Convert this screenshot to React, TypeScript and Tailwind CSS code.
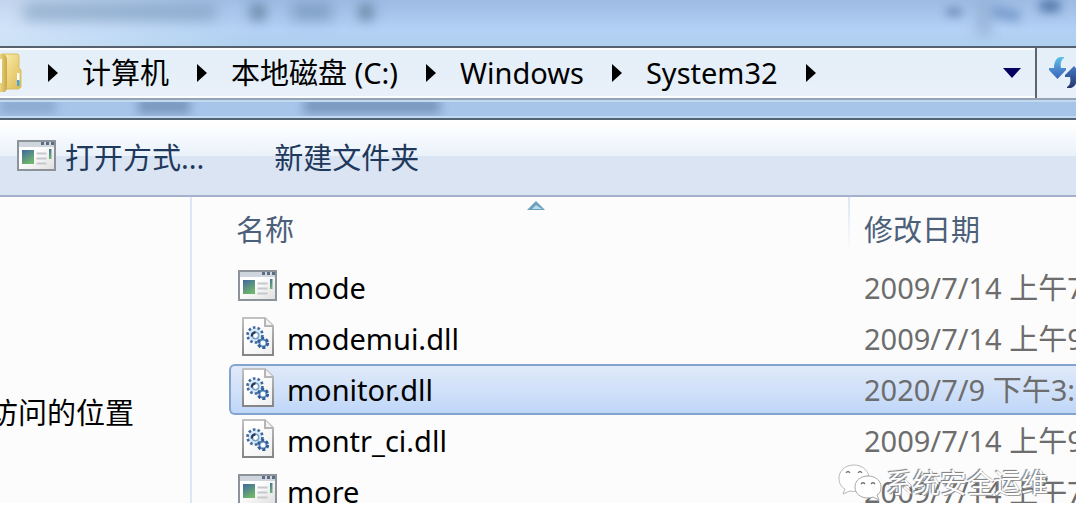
import React from "react";

type FileKind = "app" | "dll";

interface FileRow {
  name: string;
  kind: FileKind;
  date: string;
  selected?: boolean;
}

const files: FileRow[] = [
  { name: "mode", kind: "app", date: "2009/7/14 上午7:" },
  { name: "modemui.dll", kind: "dll", date: "2009/7/14 上午9:" },
  { name: "monitor.dll", kind: "dll", date: "2020/7/9 下午3:", selected: true },
  { name: "montr_ci.dll", kind: "dll", date: "2009/7/14 上午9:" },
  { name: "more", kind: "app", date: "2009/7/14 上午7:" },
];

const crumbs = ["计算机", "本地磁盘 (C:)", "Windows", "System32"];

function AppIcon() {
  return (
    <svg width="40" height="36" viewBox="0 0 40 36" aria-hidden="true" className="block shrink-0">
      <defs>
        <linearGradient id="appPane" x1="0" y1="0" x2="0.5" y2="1">
          <stop offset="0" stopColor="#40679f" />
          <stop offset="1" stopColor="#6fb46c" />
        </linearGradient>
        <linearGradient id="appBody" x1="0" y1="0" x2="1" y2="1">
          <stop offset="0.4" stopColor="#ffffff" />
          <stop offset="1" stopColor="#dedede" />
        </linearGradient>
      </defs>
      <rect x="1" y="1" width="37" height="29" fill="url(#appBody)" stroke="#8d939b" strokeWidth="2" />
      <rect x="2" y="2" width="35" height="5" fill="#cfd5dc" />
      <path d="M24 3.500h3M29 3.500h3M34 3.500h3" stroke="#5b6c84" strokeWidth="3" />
      <rect x="5" y="10" width="12" height="14" fill="url(#appPane)" />
      <path d="M19.500 13.500h10M19.500 18.500h10M19.500 23.500h10" stroke="#c6c8cb" strokeWidth="2" />
      <rect x="32" y="9" width="2.500" height="10" fill="url(#appPane)" />
    </svg>
  );
}

function DllIcon() {
  return (
    <svg width="32" height="43" viewBox="0 0 32 43" aria-hidden="true" className="block shrink-0">
      <defs>
        <linearGradient id="dllEdge" x1="0" y1="0" x2="0" y2="1">
          <stop offset="0" stopColor="#c2c2c2" />
          <stop offset="1" stopColor="#858585" />
        </linearGradient>
        <linearGradient id="dllPaper" x1="0" y1="0" x2="1" y2="1">
          <stop offset="0.3" stopColor="#ffffff" />
          <stop offset="1" stopColor="#efefef" />
        </linearGradient>
      </defs>
      <path d="M1 1H23L31 9V38H1Z" fill="url(#dllPaper)" stroke="url(#dllEdge)" strokeWidth="2" />
      <path d="M23 1V9H31" fill="#f3f3f3" stroke="#b5b5b5" strokeWidth="2" />
      <circle cx="13" cy="18" r="7" fill="#d8e9f6" />
      <circle cx="13" cy="18" r="7.500" fill="none" stroke="#41699f" strokeWidth="2.600" strokeDasharray="2.600 2.110" />
      <circle cx="13.500" cy="18.500" r="3.200" fill="#fff" stroke="#78a1c9" strokeWidth="1.500" />
      <path d="M10 19.500a3.200 3.200 0 0 1 3.500-4" fill="none" stroke="#24395c" strokeWidth="2.400" />
      <circle cx="21" cy="26" r="3.600" fill="#d8e9f6" stroke="#5b88b9" strokeWidth="2" />
      <circle cx="21" cy="26" r="4.800" fill="none" stroke="#315c97" strokeWidth="2.600" strokeDasharray="3 2.030" />
      <circle cx="21" cy="26" r="2" fill="#fff" />
    </svg>
  );
}

function FolderIcon() {
  return (
    <svg width="22" height="40" viewBox="0 0 22 40" aria-hidden="true" className="block shrink-0">
      <defs>
        <linearGradient id="folderBack" x1="0" y1="0" x2="1" y2="1">
          <stop offset="0" stopColor="#fbf0b0" />
          <stop offset="1" stopColor="#dcb94f" />
        </linearGradient>
        <linearGradient id="folderFront" x1="0" y1="0" x2="1" y2="0">
          <stop offset="0" stopColor="#f0dc8a" />
          <stop offset="1" stopColor="#c9a748" />
        </linearGradient>
      </defs>
      <path d="M2 1H17Q19 1 19 3V15L21 17V34L19 36H4Z" fill="url(#folderBack)" stroke="#d9bd62" />
      <path d="M-1 1H4Q7 3 7 8V36L5 39H-1Z" fill="url(#folderFront)" />
      <path d="M-1 6H2V30H-1Z" fill="#fffdf2" />
      <rect x="17" y="20" width="2.500" height="8" fill="#fff" />
      <rect x="17" y="27" width="2.500" height="6" fill="#4aa5dc" />
    </svg>
  );
}

function CrumbArrow() {
  return (
    <svg width="10" height="18" viewBox="0 0 10 18" aria-hidden="true" className="block shrink-0">
      <path d="M0 0L10 9L0 18Z" fill="#000" />
    </svg>
  );
}

function RefreshIcon() {
  return (
    <svg width="40" height="32" viewBox="0 0 40 32" aria-hidden="true" className="block shrink-0">
      <defs>
        <linearGradient id="refreshDown" x1="0" y1="0" x2="0" y2="1">
          <stop offset="0" stopColor="#5cc3e6" />
          <stop offset="0.6" stopColor="#4a84cc" />
          <stop offset="1" stopColor="#3b66b4" />
        </linearGradient>
        <linearGradient id="refreshUp" x1="0" y1="0" x2="0" y2="1">
          <stop offset="0" stopColor="#4377c6" />
          <stop offset="1" stopColor="#27386e" />
        </linearGradient>
      </defs>
      <path d="M15 0H11C7 1 5 5 5 11H0V13L8.500 22L17 13V11H12C11 7 12 3 15 1Z" fill="url(#refreshDown)" />
      <path d="M18 31H22C26 30 28 26 28 20H33V18L25 9L16 18V20H21C22 25 21 28 18 30Z" fill="url(#refreshUp)" />
    </svg>
  );
}

function ChatIcon() {
  return (
    <svg width="44" height="38" viewBox="0 0 44 38" aria-hidden="true" className="block shrink-0">
      <path
        d="M16 1C7 1 1 7 1 14C1 19 3 23 7 25L5 30L12 27Q15 28 19 27C18 18 23 12 31 12C29 5 23 1 16 1Z"
        fill="#fff"
        stroke="#b9b9b9"
      />
      <path
        d="M30 12C22 12 17 17 17 23C17 30 23 34 30 34Q33 34 35 33L41 36L39 31C42 29 43 27 43 23C43 17 38 12 30 12Z"
        fill="#fff"
        stroke="#a9a9a9"
      />
      <path d="M8 9q2-3 4 0M20 9q2-3 4 0M23 20q2-2.500 4 0M33 20q2-2.500 4 0" fill="none" stroke="#777" strokeWidth="1.300" />
    </svg>
  );
}

function TitleGlass() {
  return (
    <div
      aria-hidden="true"
      className="relative h-[46px] shrink-0 overflow-hidden bg-linear-to-b from-[#9dbbe3] via-[#b3d1f5] via-65% to-[#aed0ee]"
    >
      <div className="absolute inset-y-0 left-0 w-64 bg-linear-to-r from-white/40 to-transparent" />
      <div className="absolute top-1 left-6 h-4 w-48 bg-[#6f8fb0]/55 blur-[7px]" />
      <div className="absolute top-1 left-[250px] h-4 w-4 bg-[#5f7f9e]/80 blur-[6px]" />
      <div className="absolute top-1 left-[292px] h-4 w-10 bg-[#6384a6]/60 blur-[7px]" />
      <div className="absolute top-1 left-[358px] h-4 w-4 bg-[#5f7f9e]/80 blur-[6px]" />
      <div className="absolute top-2 right-[114px] h-2 w-4 bg-[#5878a8]/70 blur-[4px]" />
      <div className="absolute top-0 right-[84px] h-9 w-4 bg-[#8faccf]/60 blur-[6px]" />
      <div className="absolute top-2 right-[56px] h-3 w-7 rotate-12 bg-[#5f86bd]/60 blur-[5px]" />
      <div className="absolute top-0 right-[16px] h-3 w-5 bg-[#41699f]/80 blur-[5px]" />
    </div>
  );
}

function AddressBar() {
  return (
    <div className="flex h-[54px] shrink-0 items-stretch overflow-hidden border-y-2 border-t-[#56616d] border-b-[#94a3b5] bg-linear-to-b from-[#e4eff8] to-[#e9f0fa]">
      <nav aria-label="地址" className="flex min-w-0 flex-1 items-center border-y-2 border-white/80">
        <FolderIcon />
        <ol className="ml-[26px] flex items-center">
          {crumbs.map((crumb) => (
            <li key={crumb} className="flex items-center">
              <CrumbArrow />
              <button type="button" className="mr-7 ml-6 whitespace-nowrap text-black">
                {crumb}
              </button>
            </li>
          ))}
          <li>
            <CrumbArrow />
          </li>
        </ol>
        <button type="button" aria-label="以前的位置" className="mr-[14px] ml-auto">
          <svg width="18" height="10" viewBox="0 0 18 10" className="block">
            <path d="M0 0H18L9 10Z" fill="#04045e" />
          </svg>
        </button>
      </nav>
      <button type="button" aria-label="刷新" className="flex w-[41px] items-center overflow-hidden border-l-2 border-[#5c6670] pl-3">
        <RefreshIcon />
      </button>
    </div>
  );
}

function GlassStrip() {
  return (
    <div
      aria-hidden="true"
      className="relative h-[18px] shrink-0 overflow-hidden border-y-2 border-[#c3d9f0] bg-[#a7c4e9]"
    >
      <div className="absolute -top-1 left-0 h-4 w-14 bg-[#6384ab]/40 blur-[5px]" />
      <div className="absolute -top-1 left-[138px] h-4 w-13 bg-[#5a7ba0]/60 blur-[5px]" />
      <div className="absolute -top-1 left-[304px] h-4 w-34 bg-[#5a7ba0]/60 blur-[5px]" />
    </div>
  );
}

function Toolbar() {
  return (
    <div
      role="toolbar"
      className="flex h-[79px] shrink-0 items-center border-t-2 border-b-2 border-t-[#526373] border-b-[#a4b1cc] bg-linear-to-b from-white from-5% via-[#e9f1fa] via-48% to-[#dde7f4] text-[#1e395b]"
    >
      <div className="flex h-full w-full items-center bg-linear-to-b from-transparent from-48% to-[#dbe4f2] to-48% pl-[17px]">
        <button type="button" className="flex items-center gap-2">
          <AppIcon />
          打开方式...
        </button>
        <button type="button" className="ml-[70px]">
          新建文件夹
        </button>
      </div>
    </div>
  );
}

function FileTable() {
  return (
    <table className="w-full table-fixed border-separate border-spacing-0 text-left">
      <thead>
        <tr className="h-[65px]">
          <th scope="col" className="relative p-0 pl-[7px] font-normal text-[#4c607a]">
            名称
            <svg width="18" height="9" viewBox="0 0 18 9" aria-hidden="true" className="absolute top-1 left-1/2 -translate-x-3">
              <path d="M9 0L18 9H0Z" fill="#6d9fbd" />
              <path d="M9 4L15 8H5Z" fill="#b8dcee" />
            </svg>
          </th>
          <th scope="col" className="relative w-[228px] p-0 pl-4 font-normal text-[#4c607a]">
            <span className="absolute top-0 left-0 h-14 w-[2px] bg-linear-to-b from-[#dce6f5] to-transparent" />
            修改日期
          </th>
        </tr>
      </thead>
      <tbody>
        {files.map((file) => {
          const cell = file.selected
            ? "border-y-2 border-[#84a4d0] bg-linear-to-b from-[#e0eaf9] to-[#c0d7f8]"
            : "";
          return (
            <tr key={file.name} className="h-[51px]">
              <td className={`p-0 ${file.selected ? "rounded-l-md border-l-2 pl-[7px]" : "pl-[9px]"} ${cell}`}>
                <span className="flex items-center gap-[9px] text-black">
                  <span className="flex w-10 shrink-0 justify-center">
                    {file.kind === "app" ? <AppIcon /> : <DllIcon />}
                  </span>
                  {file.name}
                </span>
              </td>
              <td className={`overflow-hidden p-0 pl-4 whitespace-nowrap text-[#6d6d6d] ${cell}`}>{file.date}</td>
            </tr>
          );
        })}
      </tbody>
    </table>
  );
}

export default function App() {
  return (
    <div className="h-screen overflow-hidden bg-white pr-1 pb-7 font-['Noto_Sans','Noto_Sans_CJK_SC',sans-serif] text-[29px] leading-10">
      <div className="relative flex h-full flex-col overflow-hidden bg-[#fcfcfc]">
        <TitleGlass />
        <AddressBar />
        <GlassStrip />
        <Toolbar />
        <div className="flex min-h-0 flex-1">
          <aside className="flex w-48 shrink-0 items-start justify-end overflow-hidden border-r-2 border-[#dce6f5] pt-[196px] pr-14">
            <a href="#recent" className="whitespace-nowrap text-black">
              访问的位置
            </a>
          </aside>
          <main className="min-w-0 flex-1 overflow-hidden pl-[37px]">
            <FileTable />
          </main>
        </div>
        <div className="absolute right-7 bottom-0 flex items-center gap-1 text-[27px] text-white [text-shadow:-1px_-1px_1px_#777,1px_1px_0_#999]">
          <ChatIcon />
          <span>系统安全运维</span>
        </div>
      </div>
    </div>
  );
}
